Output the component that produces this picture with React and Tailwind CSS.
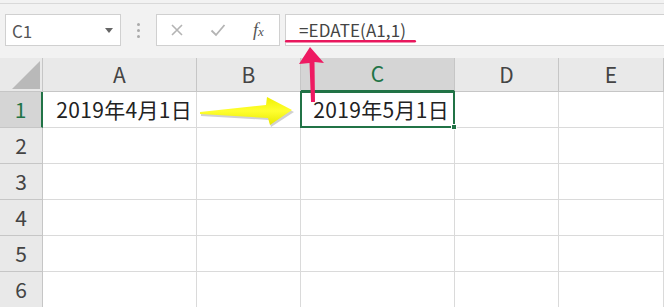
import React from 'react';

const cols = ['A', 'B', 'C', 'D', 'E'];
const rows = [1, 2, 3, 4, 5, 6];

const values = {
  A1: '2019年4月1日',
  C1: '2019年5月1日',
};

export default function App() {
  return (
    <div
      className="relative w-[664px] h-[307px] overflow-hidden bg-white text-[#333]"
      style={{ fontFamily: '"Noto Sans CJK JP", "Noto Sans", sans-serif' }}
    >
      {/* Formula bar */}
      <div className="h-[58px] bg-[#f2f2f2] pt-[3px]">
        <div className="border-t border-[#d9d9d9] pt-[10px] pl-[5px] flex items-start">
          {/* Name box */}
          <div className="w-[116px] h-[32px] bg-white border border-[#d0d0d0] flex items-center justify-between pl-[6px] pr-[7px]">
            <span className="text-[17px] text-[#555] leading-none">C1</span>
            <svg width="8" height="5" viewBox="0 0 8 5">
              <path d="M0 0 L8 0 L4 5 Z" fill="#666" />
            </svg>
          </div>

          <div className="w-[35px] h-[32px] flex flex-col items-center justify-center gap-[3px]">
            <span className="w-[3px] h-[3px] rounded-full bg-[#aaa]" />
            <span className="w-[3px] h-[3px] rounded-full bg-[#aaa]" />
            <span className="w-[3px] h-[3px] rounded-full bg-[#aaa]" />
          </div>

          {/* Cancel / enter / fx */}
          <div className="w-[124px] h-[32px] bg-white border border-[#d0d0d0] flex items-center pl-[13px]">
            <svg width="14" height="14" viewBox="0 0 14 14">
              <path d="M2 2 L12 12 M12 2 L2 12" stroke="#b4b4b4" strokeWidth="1.6" fill="none" />
            </svg>
            <svg width="16" height="14" viewBox="0 0 16 14" className="ml-[26px]">
              <path d="M1.5 7.5 L6 12 L14.5 2" stroke="#b4b4b4" strokeWidth="1.8" fill="none" />
            </svg>
            <span
              className="ml-[27px] text-[18px] italic text-[#555] leading-none"
              style={{ fontFamily: '"Liberation Serif", serif' }}
            >
              f<span className="text-[13px]">x</span>
            </span>
          </div>

          {/* Formula input */}
          <div className="ml-[5px] flex-1 h-[32px] bg-white border-y border-l border-[#d0d0d0] flex items-center pl-[13px]">
            <span className="text-[17px] text-[#444] tracking-[0.1px]">=EDATE(A1,1)</span>
          </div>
        </div>
      </div>

      {/* Grid */}
      <div className="grid grid-cols-[43px_154px_104px_154px_104px_105px] grid-rows-[34px_repeat(6,36px)]">
        {/* Corner */}
        <div className="relative bg-[#e9e9e9] border-r border-b border-[#c6c6c6]">
          <svg width="43" height="34" viewBox="0 0 43 34" className="absolute inset-0">
            <path d="M12 31 L40 31 L40 3 Z" fill="#b9b9b9" />
          </svg>
        </div>
        {cols.map((c) => (
          <div
            key={c}
            className={
              c === 'C'
                ? 'flex items-center justify-center bg-[#d5d5d5] border-r border-b-2 border-[#c6c6c6] border-b-[#217346] text-[#217346] text-[21px]'
                : 'flex items-center justify-center bg-[#e9e9e9] border-r border-b border-[#c6c6c6] text-[#444] text-[21px]'
            }
          >
            {c}
          </div>
        ))}

        {rows.map((r) => (
          <React.Fragment key={r}>
            <div
              className={
                r === 1
                  ? 'flex items-center justify-center bg-[#d5d5d5] border-r-2 border-b border-[#c6c6c6] border-r-[#217346] text-[#217346] text-[21px]'
                  : 'flex items-center justify-center bg-[#e9e9e9] border-r border-b border-[#c6c6c6] text-[#444] text-[21px]'
              }
            >
              {r}
            </div>
            {cols.map((c) => {
              const id = c + r;
              const selected = id === 'C1';
              return (
                <div
                  key={id}
                  className={
                    selected
                      ? 'relative flex items-center justify-end pr-[4px] border-2 border-[#217346] -ml-px -mt-px text-[21px] tracking-[0.3px] text-[#222]'
                      : 'flex items-center justify-end pr-[4px] border-r border-b border-[#dadada] text-[21px] tracking-[0.3px] text-[#222]'
                  }
                >
                  {values[id]}
                  {selected && (
                    <span className="absolute -right-[4px] -bottom-[4px] w-[6px] h-[6px] bg-[#217346] border border-white" />
                  )}
                </div>
              );
            })}
          </React.Fragment>
        ))}
      </div>

      {/* Annotations */}
      <svg className="absolute inset-0 pointer-events-none" width="664" height="307" viewBox="0 0 664 307">
        <defs>
          <linearGradient id="yl" x1="0" y1="0" x2="0" y2="1">
            <stop offset="0" stopColor="#f0f000" />
            <stop offset="0.5" stopColor="#ffff30" />
            <stop offset="1" stopColor="#e8e800" />
          </linearGradient>
        </defs>
        <rect x="285" y="40" width="131" height="2.6" rx="1.3" fill="#e8175d" />
        <path d="M310 47 L324 63 L314.5 62 L315 102 L311 102 L309.5 63 L299 64 Z" fill="#ee1a62" />
        <path
          d="M201 114 L267 107 L268 99 L294 112 L271 127 L269 120 L201 116 Z"
          fill="#9a9a9a"
          opacity="0.45"
        />
        <path d="M200 112 L266 105 L267 97 L292 110 L270 125 L268 118 L200 114 Z" fill="url(#yl)" />
      </svg>
    </div>
  );
}
